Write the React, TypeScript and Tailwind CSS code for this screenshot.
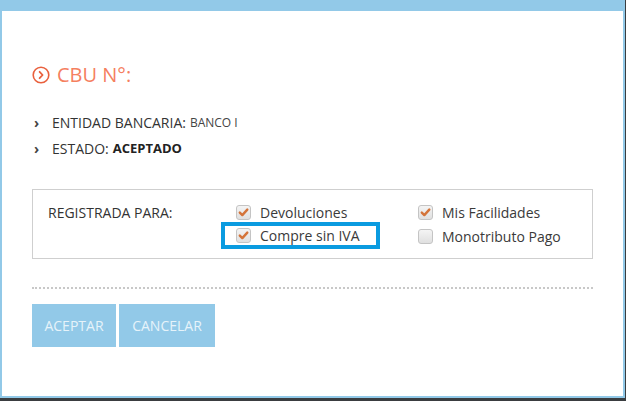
import React from "react";

interface Option {
  label: string;
  checked: boolean;
  highlight?: boolean;
}

const leftOptions: Option[] = [
  { label: "Devoluciones", checked: true },
  { label: "Compre sin IVA", checked: true, highlight: true },
];

const rightOptions: Option[] = [
  { label: "Mis Facilidades", checked: true },
  { label: "Monotributo Pago", checked: false },
];

function CheckBox({ checked }: { checked: boolean }) {
  return (
    <span className="w-[15px] h-[15px] rounded-[3px] border border-[#c4c4c4] bg-gradient-to-b from-[#f4f4f4] to-[#e0e0e0] flex items-center justify-center shrink-0">
      {checked && (
        <svg width="11" height="11" viewBox="0 0 11 11">
          <path
            d="M1.8 5.6 L4.3 8.1 L9.3 2.6"
            fill="none"
            stroke="#d4743a"
            strokeWidth="2.4"
            strokeLinecap="round"
            strokeLinejoin="round"
          />
        </svg>
      )}
    </span>
  );
}

function OptionRow({ option }: { option: Option }) {
  return (
    <div className="h-[24px] flex items-center gap-[9px] text-[14px] text-[#3a3a3a]">
      <CheckBox checked={option.checked} />
      <span>{option.label}</span>
    </div>
  );
}

export default function App() {
  return (
    <div className="w-[626px] h-[401px] bg-[#3a3d40] overflow-hidden font-['Open_Sans',sans-serif]">
      <div className="w-[625px] h-[398px] bg-[#92c9e8] pt-[11px] pl-[2px]">
        <div className="w-[621px] h-[385px] bg-white pl-[30px] pr-[30px] pt-[55px]">
          {/* title */}
          <div className="flex items-center gap-[7px] h-[17px]">
            <svg width="18" height="18" viewBox="0 0 18 18">
              <circle cx="9" cy="9" r="7.8" fill="none" stroke="#e9603d" strokeWidth="1.6" />
              <path d="M7.6 5.8 L10.6 9 L7.6 12.2" fill="none" stroke="#e9603d" strokeWidth="1.8" strokeLinecap="round" strokeLinejoin="round" />
            </svg>
            <span className="text-[20px] text-[#f5805f] leading-none">CBU N°:</span>
          </div>

          {/* details */}
          <div className="mt-[30px] flex flex-col gap-[7px] text-[14px] text-[#333]">
            <div className="flex items-center h-[19px]">
              <span className="w-[20px] pl-[2px] text-[14px] font-bold text-[#444]">›</span>
              <span>ENTIDAD BANCARIA:</span>
              <span className="ml-[4px] text-[12px] text-[#444]">BANCO I</span>
            </div>
            <div className="flex items-center h-[19px]">
              <span className="w-[20px] pl-[2px] text-[14px] font-bold text-[#444]">›</span>
              <span>ESTADO:</span>
              <span className="ml-[4px] text-[13px] font-bold text-[#222]">ACEPTADO</span>
            </div>
          </div>

          {/* registrada para */}
          <div className="mt-[31px] w-[561px] h-[70px] border border-[#cfcfcf] pl-[15px] pt-[10px] flex">
            <div className="w-[188px] pt-[2px] text-[14px] text-[#333]">REGISTRADA PARA:</div>
            <div className="w-[182px] flex flex-col">
              {leftOptions.map((o) =>
                o.highlight ? (
                  <div key={o.label} className="-mt-[2px] -ml-[15px] w-[159px] h-[27px] border-[4px] border-[#0a9be0] pl-[11px] flex items-center">
                    <OptionRow option={o} />
                  </div>
                ) : (
                  <OptionRow key={o.label} option={o} />
                )
              )}
            </div>
            <div className="flex flex-col">
              {rightOptions.map((o) => (
                <OptionRow key={o.label} option={o} />
              ))}
            </div>
          </div>

          {/* separator */}
          <div className="mt-[28px] w-[561px] border-t-2 border-dotted border-[#c8c8c8]" />

          {/* buttons */}
          <div className="mt-[15px] flex gap-[3px]">
            <button className="w-[84px] h-[43px] bg-[#92c9e8] text-[14px] text-[#e6f3fa]">ACEPTAR</button>
            <button className="w-[96px] h-[43px] bg-[#92c9e8] text-[14px] text-[#e6f3fa]">CANCELAR</button>
          </div>
        </div>
      </div>
    </div>
  );
}
